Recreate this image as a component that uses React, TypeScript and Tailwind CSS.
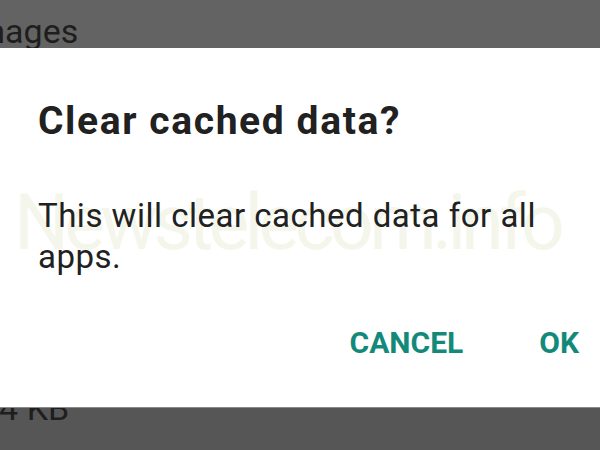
export default function App() {
  return (
    <div className="w-[600px] h-[450px] overflow-hidden flex flex-col bg-white font-['Roboto',sans-serif]">
      {/* dimmed settings list behind the dialog */}
      <div className="h-[48px] shrink-0 bg-[#636363] overflow-hidden flex items-end">
        <span className="ml-[-34px] mb-[-3px] text-[34px] leading-[40px] text-[#1e1e1e]">Images</span>
      </div>

      <div className="relative h-[359px] shrink-0 bg-white px-[38px]">
        <div className="absolute left-[14px] top-[137px] text-[77px] leading-none tracking-[-4.8px] text-[#f5f6eb] select-none">
          Newstelecom.info
        </div>
        <div className="relative">
          <h1 className="pt-[50px] text-[39px] leading-[46px] font-bold text-[#212121] tracking-[1.6px]">
            Clear cached data?
          </h1>
          <p className="mt-[51px] text-[33px] leading-[41px] text-[#212121] tracking-[0.5px]">
            This will clear cached data for all apps.
          </p>
          <div className="mt-[49px] mr-[-17px] flex justify-end gap-[76px]">
            <button className="text-[30px] leading-[34px] font-bold text-[#138a79]">CANCEL</button>
            <button className="text-[30px] leading-[34px] font-bold text-[#138a79]">OK</button>
          </div>
        </div>
      </div>

      <div className="flex-1 bg-[#565656] overflow-hidden border-t border-[#8a8a8a]">
        <span className="block ml-[-20px] mt-[-20px] text-[34px] leading-[40px] text-[#1e1e1e]">24 KB</span>
      </div>
    </div>
  )
}
